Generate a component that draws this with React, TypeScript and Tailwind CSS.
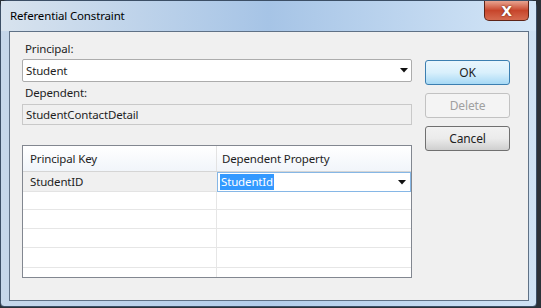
import React from "react";

const font = { fontFamily: '"Noto Sans", "Open Sans", sans-serif' };

function Arrow() {
  return (
    <svg width="8" height="5" viewBox="0 0 8 5" className="shrink-0">
      <path d="M0 0 H8 L4 4.5 Z" fill="#111" />
    </svg>
  );
}

export default function App() {
  const emptyRows = [18, 19, 19, 20, 10];

  return (
    <div
      className="w-[541px] h-[308px] bg-[#2b3138] overflow-hidden text-[11.5px] tracking-[-0.15px] text-[#1e1e1e] leading-none"
      style={font}
    >
      {/* Window frame */}
      <div className="relative w-[537px] h-[307px] rounded-t-[7px] rounded-b-[4px] border border-[#3c4f66] bg-gradient-to-r from-[#c6d7ea] via-[#b3cdea] to-[#cfe2f4] flex flex-col">
        {/* Title bar */}
        <div className="h-[30px] flex items-center pl-[9px] bg-gradient-to-r from-[#d8e3ee] via-[#a6c4e6] to-[#d4e6f7]">
          <span className="text-[11.5px] text-black -mt-[1px]">Referential Constraint</span>
        </div>

        {/* Close button */}
        <div className="absolute top-0 right-[7px] w-[45px] h-[20px] rounded-b-[5px] border border-t-0 border-[#5d2418] bg-gradient-to-b from-[#e7a390] via-[#c7452b] to-[#d56a4f] flex items-center justify-center">
          <span className="text-white font-bold text-[14px] leading-none" style={{ fontFamily: '"DejaVu Sans", sans-serif', textShadow: "0 0 2px #5a1a0a" }}>
            X
          </span>
        </div>

        {/* Client area */}
        <div className="ml-[8px] mr-[7px] h-[270px] border border-[#5f7186] bg-[#f0f0f0] flex">
          {/* Left column */}
          <div className="ml-[12px] w-[390px] pt-[7px] flex flex-col">
            <div className="h-[20px] flex items-center pl-[3px]">Principal:</div>
            <div className="h-[23px] border border-[#acacac] rounded-[2px] bg-white flex items-center justify-between pl-[3px] pr-[3px]">
              <span>Student</span>
              <Arrow />
            </div>
            <div className="h-[22px] flex items-center pl-[3px]">Dependent:</div>
            <div className="h-[21px] border border-[#c9c9c9] bg-[#f0f0f0] flex items-center pl-[3px]">
              StudentContactDetail
            </div>
            <div className="h-[20px]" />

            {/* Grid */}
            <div className="h-[133px] border border-[#828790] bg-white flex flex-col overflow-hidden">
              <div className="h-[26px] shrink-0 flex border-b border-[#d5d5d5] bg-gradient-to-b from-white to-[#f1f5fa]">
                <div className="w-[194px] border-r border-[#e3e3e3] flex items-center pl-[7px]">Principal Key</div>
                <div className="flex-1 flex items-center pl-[5px]">Dependent Property</div>
              </div>
              <div className="h-[20px] shrink-0 flex border-b border-[#e3e3e3]">
                <div className="w-[194px] bg-[#f0f0f0] flex items-center pl-[7px]">StudentID</div>
                <div className="flex-1 border border-[#86b7e6] -mb-[1px] bg-white flex items-center justify-between pl-[2px] pr-[4px]">
                  <span className="bg-[#3399ff] text-white px-[1px] py-[2px]">StudentId</span>
                  <Arrow />
                </div>
              </div>
              {emptyRows.map((h, i) => (
                <div key={i} className="shrink-0 flex border-b border-[#e6e6e6]" style={{ height: h }}>
                  <div className="w-[194px] border-r border-[#e6e6e6]" />
                  <div className="flex-1" />
                </div>
              ))}
            </div>
          </div>

          {/* Buttons */}
          <div className="ml-[13px] pt-[28px] flex flex-col gap-[8px] text-[12px]">
            <div className="w-[85px] h-[25px] rounded-[3px] border border-[#3c7fb1] bg-gradient-to-b from-[#eaf6fd] via-[#d9f0fc] to-[#a7d9f5] flex items-center justify-center">
              OK
            </div>
            <div className="w-[85px] h-[25px] rounded-[3px] border border-[#c2c2c2] bg-[#f4f4f4] text-[#a0a0a0] flex items-center justify-center">
              Delete
            </div>
            <div className="w-[85px] h-[25px] rounded-[3px] border border-[#707070] bg-gradient-to-b from-[#f2f2f2] via-[#ebebeb] to-[#cfcfcf] flex items-center justify-center">
              Cancel
            </div>
          </div>
        </div>
      </div>
    </div>
  );
}
